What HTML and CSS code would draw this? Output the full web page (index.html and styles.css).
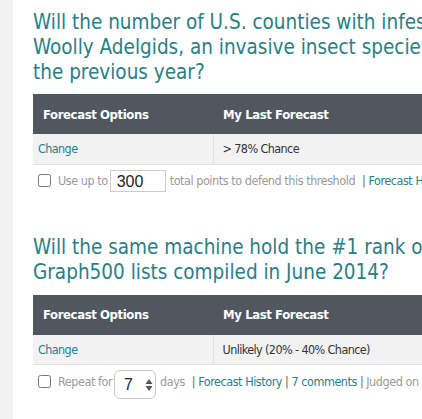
FILE: index.html
```html
<!DOCTYPE html>
<html>
<head>
<meta charset="utf-8">
<link rel="stylesheet" href="styles.css">
</head>
<body>
<div class="page">
  <div class="rail"></div>
  <div class="main">
    <section class="question">
      <h2 class="title">Will the number of U.S. counties with infestations of Hemlock<br>Woolly Adelgids, an invasive insect species, increase compared to<br>the previous year?</h2>
      <table class="grid">
        <thead>
          <tr><th class="c1">Forecast Options</th><th class="c2">My Last Forecast</th><th class="c3">Consensus</th></tr>
        </thead>
        <tbody>
          <tr><td class="c1"><a class="link">Change</a></td><td class="c2">&gt; 78% Chance</td><td class="c3"></td></tr>
        </tbody>
      </table>
      <div class="actions">
        <input type="checkbox" class="check">
        <span class="muted">Use up to</span>
        <span class="points">300</span>
        <span class="muted">total points to defend this threshold</span>
        <span class="sep sep-wide">|</span><a class="link">Forecast History</a>
      </div>
    </section>

    <section class="question second">
      <h2 class="title">Will the same machine hold the #1 rank on both the November 2013 and<br>Graph500 lists compiled in June 2014?</h2>
      <table class="grid">
        <thead>
          <tr><th class="c1">Forecast Options</th><th class="c2">My Last Forecast</th><th class="c3">Consensus</th></tr>
        </thead>
        <tbody>
          <tr><td class="c1"><a class="link">Change</a></td><td class="c2">Unlikely (20% - 40% Chance)</td><td class="c3"></td></tr>
        </tbody>
      </table>
      <div class="actions">
        <input type="checkbox" class="check">
        <span class="muted">Repeat for</span>
        <span class="days">7<svg class="spin" width="8" height="14" viewBox="0 0 8 14"><path d="M4 1 L7.5 6 L0.5 6 Z" fill="#555"/><path d="M4 13 L7.5 8 L0.5 8 Z" fill="#555"/></svg></span>
        <span class="muted">days</span>
        <span class="sep sep-wide">|</span><a class="link">Forecast History</a><span class="sep">|</span><a class="link">7 comments</a><span class="sep">|</span><span class="muted">Judged on 4 June 2014</span>
      </div>
    </section>
  </div>
</div>
</body>
</html>
```

FILE: styles.css
```css
html, body {
  margin: 0;
  padding: 0;
  background: #fff;
  overflow: hidden;
}
body {
  font-family: "DejaVu Sans Condensed", "DejaVu Sans", sans-serif;
  width: 422px;
  height: 419px;
}
.page {
  display: flex;
  width: 900px;
  min-height: 419px;
}
.rail {
  width: 13px;
  flex: none;
  background: #f2f2f2;
}
.main {
  padding-left: 20px;
  flex: 1;
}
.question {
  padding-top: 10px;
}
.question.second {
  padding-top: 38px;
}
.title {
  margin: 0 0 9px 0;
  font-weight: normal;
  font-size: 20.5px;
  line-height: 25px;
  color: #2b7e86;
  white-space: nowrap;
}
.second .title {
  margin-bottom: 10px;
}
.grid {
  border-collapse: collapse;
  width: 760px;
  table-layout: fixed;
}
.grid th {
  background: #51575e;
  color: #fff;
  text-align: left;
  font-weight: bold;
  font-size: 13px;
  letter-spacing: -0.4px;
  height: 40px;
  padding: 0 10px;
  box-sizing: border-box;
}
.grid td {
  background: #f2f2f2;
  height: 30px;
  font-size: 12.5px;
  letter-spacing: -0.6px;
  color: #333;
  padding: 0 9px 0 5px;
  box-sizing: border-box;
  border-bottom: 1px solid #e0e0e0;
}
.grid td.c2 {
  border-left: 1px solid #e2e2e2;
  padding-left: 9px;
}
.grid .c1 { width: 180px; }
.grid .c2 { width: 300px; }
.link {
  color: #2b7e86;
  text-decoration: none;
}
.actions {
  display: flex;
  align-items: center;
  white-space: nowrap;
  font-size: 12.5px;
  letter-spacing: -0.45px;
  height: 32px;
  color: #333;
}
.check {
  margin: 0 7px 0 5px;
  width: 13px;
  height: 13px;
}
.muted {
  color: #9a9a9a;
}
.points {
  display: inline-block;
  box-sizing: border-box;
  width: 56px;
  height: 22px;
  margin: 0 4px 0 2px;
  border: 1px solid #ccc;
  padding: 1px 0 0 6px;
  font-family: "Liberation Sans", Arial, sans-serif;
  font-size: 16px;
  letter-spacing: 0;
  line-height: 19px;
  color: #222;
}
.days {
  display: inline-flex;
  align-items: center;
  box-sizing: border-box;
  width: 42px;
  height: 29px;
  margin: 6px 4px 0 2px;
  border: 1px solid #c8c8c8;
  border-radius: 6px;
  padding: 2px 0 0 9px;
  font-family: "Liberation Sans", Arial, sans-serif;
  font-size: 16px;
  letter-spacing: 0;
  color: #222;
}
.spin {
  margin-left: 12px;
}
.sep {
  color: #666;
  margin: 0 3px;
}
.sep-wide {
  margin-left: 7px;
}
```
